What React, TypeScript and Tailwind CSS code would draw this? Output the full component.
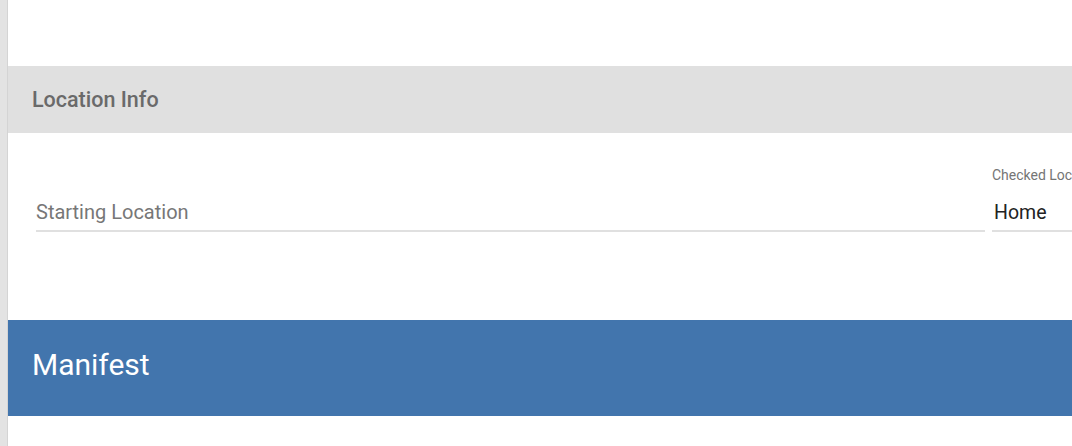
export default function App() {
  return (
    <div className="flex h-[446px] w-[1072px] overflow-hidden bg-white font-['Roboto',sans-serif]">
      <div className="w-[8px] shrink-0 border-r border-[#d4d4d4] bg-[#e3e3e3]" />
      <div className="flex min-w-0 flex-1 flex-col">
        <div className="h-[66px] shrink-0" />
        <div className="flex h-[67px] shrink-0 items-center bg-[#e0e0e0] pl-[24px]">
          <h2 className="text-[21.5px] font-medium leading-none text-[#6a6a6a]">Location Info</h2>
        </div>
        <div className="flex h-[187px] shrink-0 gap-[7px] pl-[28px] pt-[34px]">
          <div className="flex w-[949px] shrink-0 flex-col">
            <div className="h-[17px]" />
            <div className="flex h-[48px] items-end border-b-2 border-[#e0e0e0] pb-[8px]">
              <span className="text-[20px] leading-none text-[#777777]">Starting Location</span>
            </div>
          </div>
          <div className="flex w-[300px] shrink-0 flex-col">
            <label className="h-[17px] whitespace-nowrap text-[14px] leading-[17px] text-[#757575]">Checked Location</label>
            <div className="flex h-[48px] items-end border-b-2 border-[#e0e0e0] pb-[8px] pl-[2px]">
              <span className="text-[19.5px] leading-none text-[#222222]">Home</span>
            </div>
          </div>
        </div>
        <div className="flex h-[96px] shrink-0 items-center bg-[#4275ad] pb-[6px] pl-[24px]">
          <h1 className="text-[30px] leading-none text-white">Manifest</h1>
        </div>
      </div>
    </div>
  )
}
